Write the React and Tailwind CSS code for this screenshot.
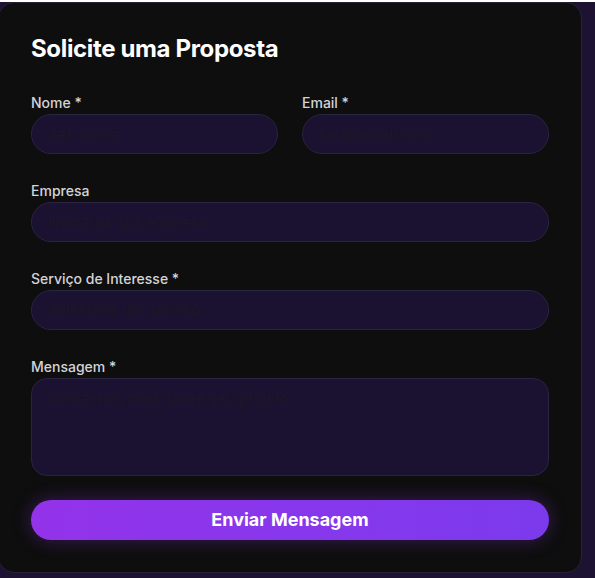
import React from 'react';

const boxClass =
  'w-full h-10 px-4 rounded-full bg-[#1b1130] border border-[#2a2342] text-[15px] outline-none';
const fieldClass = boxClass + ' text-gray-200 placeholder:text-[#1c1826]';

function Field({ label, children }) {
  return (
    <div>
      <label className="block text-sm leading-5 font-medium text-[#d4d4d8] mb-px">{label}</label>
      {children}
    </div>
  );
}

function App() {
  return (
    <div className="min-h-[578px] bg-[#1d1231]" style={{ fontFamily: 'Inter, "Noto Sans", sans-serif' }}>
      <div className="-ml-[2px] w-[584px] mt-[2px] bg-[#0e0e0e] border border-[#26223a] rounded-2xl p-8 pb-8">
        <h2 className="text-2xl leading-8 font-bold tracking-[-0.35px] text-white mb-7 -mt-[2px]">Solicite uma Proposta</h2>

        {/* form fields */}
        <div className="flex flex-col gap-[27px]">
          <div className="grid grid-cols-2 gap-6">
            <Field label="Nome *">
              <input className={fieldClass} placeholder="Seu nome" />
            </Field>
            <Field label="Email *">
              <input className={fieldClass} placeholder="seu@email.com" />
            </Field>
          </div>

          <Field label="Empresa">
            <input className={fieldClass} placeholder="Nome da sua empresa" />
          </Field>

          <Field label="Serviço de Interesse *">
            <div className={boxClass + ' flex items-center text-[#1c1826]'}>Selecione um serviço</div>
          </Field>

          <Field label="Mensagem *">
            <textarea
              rows={3}
              className="w-full h-[98px] block px-4 py-2 rounded-2xl bg-[#1b1130] border border-[#2a2342] text-[15px] leading-6 text-gray-200 placeholder:text-[#1c1826] outline-none resize-none"
              placeholder="Conte-nos mais sobre seu projeto..."
            />
          </Field>
        </div>

        <button className="mt-6 w-full h-10 rounded-full bg-gradient-to-r from-[#9333ea] to-[#7c3aed] text-white text-lg font-bold shadow-[0_0_18px_rgba(147,51,234,0.35)]">
          Enviar Mensagem
        </button>
      </div>
    </div>
  );
}

export default App;
